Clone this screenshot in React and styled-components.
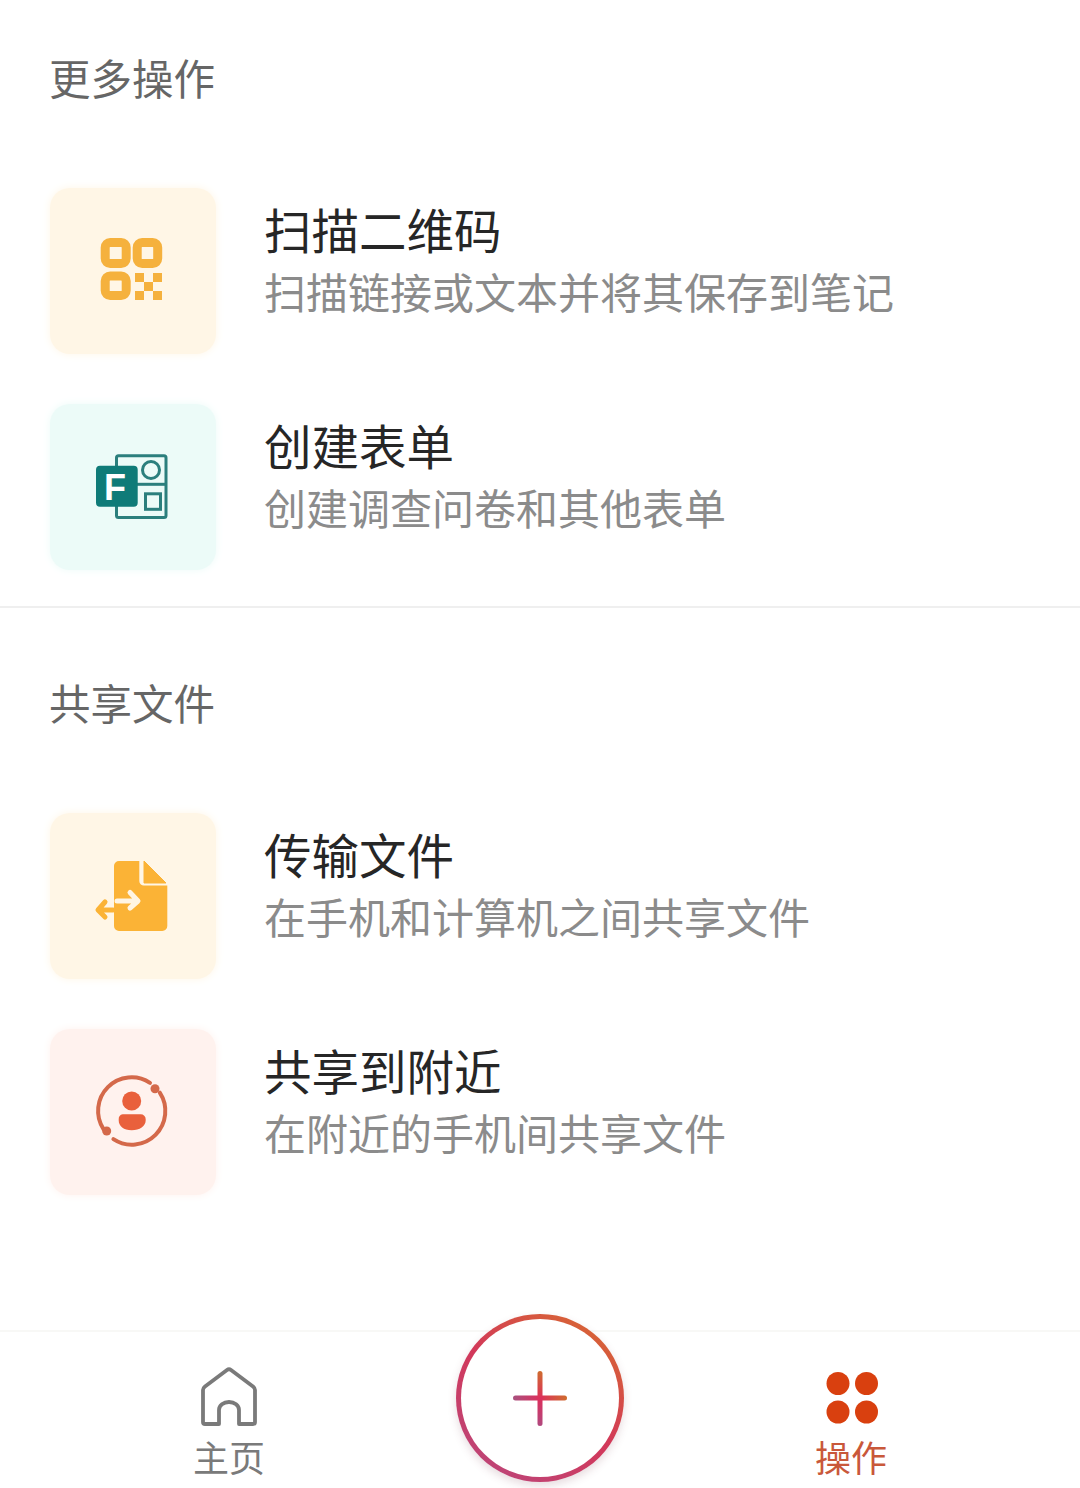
import React from 'react';
import styled, { createGlobalStyle } from 'styled-components';

const GlobalStyle = createGlobalStyle`
  html, body {
    margin: 0;
    padding: 0;
    background: #ffffff;
  }
  body {
    font-family: "Noto Sans CJK SC", "Noto Sans", sans-serif;
  }
`;

const Page = styled.div`
  width: 1080px;
  height: 1488px;
  display: flex;
  flex-direction: column;
  overflow: hidden;
  background: #ffffff;
`;

const Section = styled.section`
  padding: ${(p) => (p.$first ? '47px' : '64px')} 0 36px 50px;
  border-bottom: ${(p) => (p.$first ? '2px solid #efefef' : 'none')};
`;

const SectionTitle = styled.h2`
  margin: 0 0 81px -1px;
  font-size: 41.5px;
  line-height: 60px;
  font-weight: 400;
  color: #666666;
`;

const List = styled.div`
  display: flex;
  flex-direction: column;
  gap: 50px;
`;

const Row = styled.div`
  display: flex;
  align-items: flex-start;
  gap: 48px;
`;

const Tile = styled.div`
  width: 166px;
  height: 166px;
  flex: none;
  display: flex;
  align-items: center;
  justify-content: center;
  border-radius: 20px;
  background: ${(p) => p.$bg};
  box-shadow: 0 0 8px ${(p) => p.$bg};
`;

const RowText = styled.div`
  padding-top: 11px;
  display: flex;
  flex-direction: column;
`;

const RowName = styled.div`
  font-size: 47.5px;
  line-height: 60px;
  color: #262626;
`;

const RowDesc = styled.div`
  margin-top: 2px;
  font-size: 42px;
  line-height: 60px;
  color: #8b8b8b;
`;

const BottomNav = styled.nav`
  position: relative;
  margin-top: auto;
  height: 158px;
  box-sizing: border-box;
  padding: 33px 129px 0;
  display: flex;
  justify-content: space-between;
  border-top: 2px solid #f8f8f6;
`;

const Tab = styled.div`
  width: 200px;
  display: flex;
  flex-direction: column;
  align-items: center;
  gap: 5px;
`;

const TabLabel = styled.span`
  font-size: 36px;
  line-height: 44px;
  color: ${(p) => (p.$active ? '#c9583a' : '#7a7a7a')};
`;

const Fab = styled.button`
  position: absolute;
  left: 456px;
  top: -18px;
  width: 168px;
  height: 168px;
  box-sizing: border-box;
  padding: 0;
  display: flex;
  align-items: center;
  justify-content: center;
  border: 5px solid transparent;
  border-radius: 50%;
  background:
    linear-gradient(#ffffff, #ffffff) padding-box,
    linear-gradient(215deg, #d9702a 0%, #d2385a 50%, #b8487f 100%) border-box;
  box-shadow: 0 4px 8px rgba(120, 60, 80, 0.18);
`;

const QrIcon = () => (
  <svg width="80" height="80" viewBox="0 0 80 80">
    <g fill="none" stroke="#f5b13d" strokeWidth="9">
      <rect x="12.2" y="11.5" width="21" height="21" rx="5" />
      <rect x="44.2" y="11.5" width="20.5" height="21" rx="5" />
      <rect x="12.2" y="45" width="21" height="19.5" rx="5" />
    </g>
    <g fill="#f5b13d">
      <rect x="42" y="42" width="9" height="9" />
      <rect x="60" y="42" width="9" height="9" />
      <rect x="51" y="51" width="9" height="9" />
      <rect x="42" y="60" width="9" height="9" />
      <rect x="60" y="60" width="9" height="9" />
    </g>
  </svg>
);

const FormsIcon = () => (
  <svg width="80" height="80" viewBox="0 0 80 80">
    <g fill="none" stroke="#2b7f7d" strokeWidth="3">
      <rect x="23.5" y="8.8" width="49.5" height="61.7" rx="2" />
      <path d="M44 37.3H73" />
      <circle cx="58" cy="23" r="8.5" />
      <rect x="52.5" y="46.8" width="15" height="15.5" />
    </g>
    <rect x="3" y="18.7" width="41.7" height="41" rx="4" fill="#0f7b78" />
    <text
      x="11"
      y="53"
      fill="#ffffff"
      fontFamily="Liberation Sans, sans-serif"
      fontSize="36"
      fontWeight="700"
    >
      F
    </text>
  </svg>
);

const TransferIcon = () => (
  <svg width="80" height="80" viewBox="0 0 80 80">
    <path
      fill="#fbb336"
      d="M26 5H46.3V25a4.5 4.5 0 0 0 4.5 4.5H74.3V70a5 5 0 0 1-5 5H26a5 5 0 0 1-5-5V10a5 5 0 0 1 5-5z"
    />
    <path fill="#fbb336" d="M51 5L73 27H51z" stroke="#fbb336" strokeWidth="1" strokeLinejoin="round" />
    <g fill="none" strokeWidth="5" strokeLinecap="round" strokeLinejoin="round">
      <path stroke="#fff5e3" d="M24 45H44M37 36.5L45 45L37 52" />
      <path stroke="#fbb336" d="M20 54H6M12 46L5 54L12 61" />
    </g>
  </svg>
);

const NearbyIcon = () => (
  <svg width="80" height="80" viewBox="0 0 80 80">
    <g fill="none" stroke="#d4694a" strokeWidth="4" strokeLinecap="round">
      <path d="M66.8 20.7A33.5 33.5 0 0 1 20.4 67.1" />
      <path d="M10.6 57.3A33.5 33.5 0 0 1 57 10.9" />
    </g>
    <circle cx="62" cy="16.7" r="4.5" fill="#d4694a" />
    <circle cx="13.7" cy="59" r="4.5" fill="#d4694a" />
    <circle cx="38.7" cy="29" r="9.5" fill="#e9603c" />
    <path
      fill="#e9603c"
      d="M29.7 42.3H47.7a5 5 0 0 1 5 5v1c0 6-6 10-14 10s-13-4-13-10v-1a5 5 0 0 1 4-5z"
    />
  </svg>
);

const HomeIcon = () => (
  <svg width="64" height="64" viewBox="0 0 64 64">
    <path
      fill="none"
      stroke="#7a7a7a"
      strokeWidth="3.8"
      strokeLinejoin="round"
      d="M22 59H8a2 2 0 0 1-2-2V25q0-2 2-3.5L30 5q2-1.5 4 0L56 21.5q2 1.5 2 3.5V57a2 2 0 0 1-2 2H42V45a10 8 0 0 0-20 0z"
    />
  </svg>
);

const ActionsIcon = () => (
  <svg width="64" height="64" viewBox="0 0 64 64">
    <g fill="#d9400f">
      <circle cx="19" cy="18.5" r="11.5" />
      <circle cx="47.5" cy="18.5" r="11.5" />
      <circle cx="19" cy="47" r="11.5" />
      <circle cx="47.5" cy="47" r="11.5" />
    </g>
  </svg>
);

const PlusIcon = () => (
  <svg width="64" height="64" viewBox="0 0 64 64">
    <defs>
      <linearGradient id="plusV" x1="0" y1="0" x2="0" y2="1">
        <stop offset="0" stopColor="#cf6d2e" />
        <stop offset="0.5" stopColor="#dc2f5c" />
        <stop offset="1" stopColor="#b0497f" />
      </linearGradient>
      <linearGradient id="plusH" x1="0" y1="0" x2="1" y2="0">
        <stop offset="0" stopColor="#a8527f" />
        <stop offset="0.5" stopColor="#dc2f5c" />
        <stop offset="1" stopColor="#cf6d2e" />
      </linearGradient>
    </defs>
    <rect x="5" y="29.5" width="54" height="5" rx="2.5" fill="url(#plusH)" />
    <rect x="29.5" y="5" width="5" height="55" rx="2.5" fill="url(#plusV)" />
  </svg>
);

const sections = [
  {
    title: '更多操作',
    items: [
      { name: '扫描二维码', desc: '扫描链接或文本并将其保存到笔记', bg: '#fff6e6', icon: <QrIcon /> },
      { name: '创建表单', desc: '创建调查问卷和其他表单', bg: '#ecfbf8', icon: <FormsIcon /> },
    ],
  },
  {
    title: '共享文件',
    items: [
      { name: '传输文件', desc: '在手机和计算机之间共享文件', bg: '#fff6e6', icon: <TransferIcon /> },
      { name: '共享到附近', desc: '在附近的手机间共享文件', bg: '#fff2ee', icon: <NearbyIcon /> },
    ],
  },
];

const App = () => (
  <Page>
    <GlobalStyle />
    {sections.map((section, i) => (
      <Section key={section.title} $first={i === 0}>
        <SectionTitle>{section.title}</SectionTitle>
        <List>
          {section.items.map((item) => (
            <Row key={item.name}>
              <Tile $bg={item.bg}>{item.icon}</Tile>
              <RowText>
                <RowName>{item.name}</RowName>
                <RowDesc>{item.desc}</RowDesc>
              </RowText>
            </Row>
          ))}
        </List>
      </Section>
    ))}
    <BottomNav>
      <Tab>
        <HomeIcon />
        <TabLabel>主页</TabLabel>
      </Tab>
      <Fab aria-label="add">
        <PlusIcon />
      </Fab>
      <Tab>
        <ActionsIcon />
        <TabLabel $active>操作</TabLabel>
      </Tab>
    </BottomNav>
  </Page>
);

export default App;
